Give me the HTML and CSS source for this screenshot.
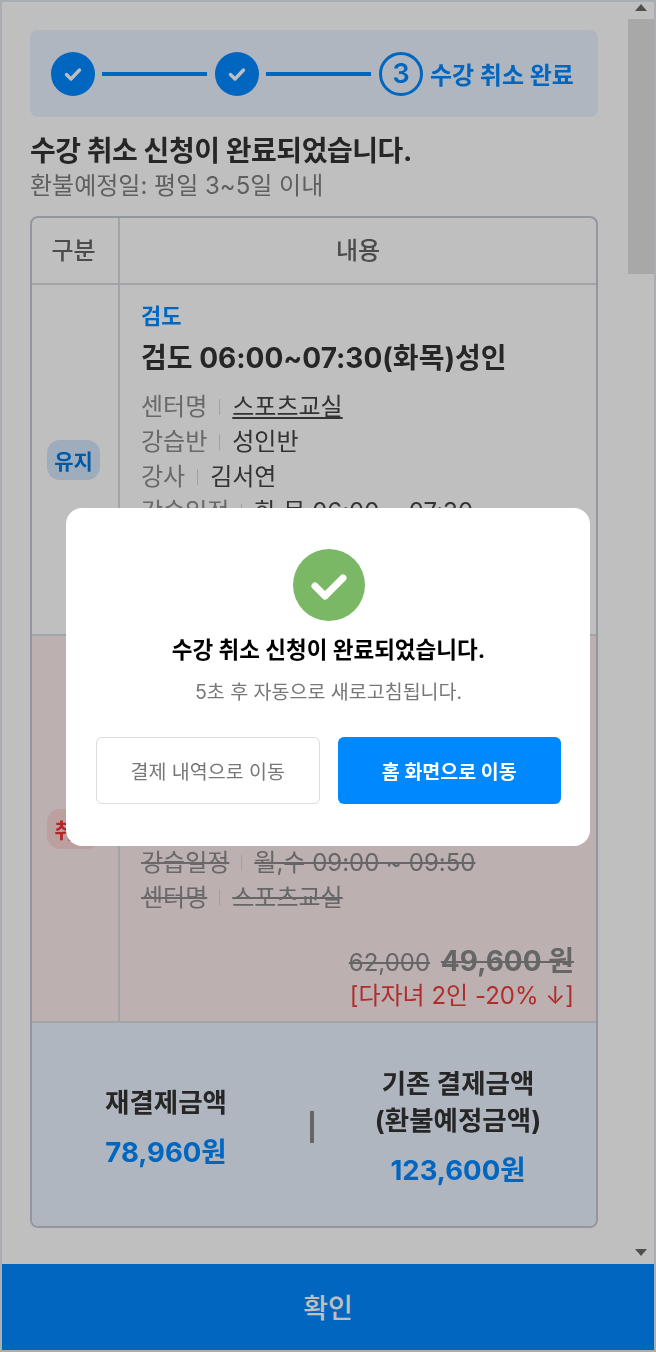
FILE: index.html
```html
<!DOCTYPE html>
<html lang="ko">

<head>
    <meta charset="UTF-8">
    <meta name="viewport" content="width=device-width, initial-scale=1.0">
    <title>수강 취소 완료</title>
    <link rel="stylesheet" href="styles.css">
</head>

<body>
    <div class="frame">
        <div class="page">
            <div class="scroll-area">
                <main class="content">
                    <div class="stepper">
                        <span class="step done">
                            <svg width="20" height="20" viewBox="0 0 20 20"><path d="M3.5 10.5l4.5 4.5 8.5-9" fill="none" stroke="#fff" stroke-width="3.4" stroke-linecap="round" stroke-linejoin="round"/></svg>
                        </span>
                        <span class="step-line"></span>
                        <span class="step done">
                            <svg width="20" height="20" viewBox="0 0 20 20"><path d="M3.5 10.5l4.5 4.5 8.5-9" fill="none" stroke="#fff" stroke-width="3.4" stroke-linecap="round" stroke-linejoin="round"/></svg>
                        </span>
                        <span class="step-line"></span>
                        <span class="step current">3</span>
                        <span class="step-label">수강 취소 완료</span>
                    </div>

                    <h1 class="notice-title">수강 취소 신청이 완료되었습니다.</h1>
                    <p class="notice-sub">환불예정일: 평일 3~5일 이내</p>

                    <div class="table">
                        <div class="table-head">
                            <div class="col-kind">구분</div>
                            <div class="col-body">내용</div>
                        </div>

                        <div class="table-row keep">
                            <div class="col-kind"><span class="badge badge-keep">유지</span></div>
                            <div class="col-body">
                                <div class="category">검도</div>
                                <div class="class-title">검도 06:00~07:30(화목)성인</div>
                                <div class="info"><span class="info-key">센터명</span><a class="info-val link">스포츠교실</a></div>
                                <div class="info"><span class="info-key">강습반</span><span class="info-val">성인반</span></div>
                                <div class="info"><span class="info-key">강사</span><span class="info-val">김서연</span></div>
                                <div class="info"><span class="info-key">강습일정</span><span class="info-val">화,목 06:00 ~ 07:30</span></div>
                            </div>
                        </div>

                        <div class="table-row cancel">
                            <div class="col-kind"><span class="badge badge-cancel">취소</span></div>
                            <div class="col-body">
                                <div class="info struck"><span class="info-key">강습일정</span><span class="info-val">월,수 09:00 ~ 09:50</span></div>
                                <div class="info struck"><span class="info-key">센터명</span><a class="info-val link">스포츠교실</a></div>
                                <div class="price">
                                    <span class="price-old">62,000</span>
                                    <span class="price-now">49,600 원</span>
                                </div>
                                <div class="discount">[다자녀 2인 -20% ↓]</div>
                            </div>
                        </div>

                        <div class="summary">
                            <div class="summary-item">
                                <div class="summary-label">재결제금액</div>
                                <div class="summary-value">78,960원</div>
                            </div>
                            <span class="summary-divider"></span>
                            <div class="summary-item">
                                <div class="summary-label">기존 결제금액<br>(환불예정금액)</div>
                                <div class="summary-value">123,600원</div>
                            </div>
                        </div>
                    </div>
                </main>
                <div class="scrollbar">
                    <span class="arrow-up"></span>
                    <span class="thumb"></span>
                    <span class="arrow-down"></span>
                </div>
            </div>
            <button class="confirm">확인</button>
        </div>

        <div class="dim">
            <div class="modal">
                <span class="modal-icon">
                    <svg width="72" height="72" viewBox="0 0 72 72"><path d="M22 37l10 10 18-18" fill="none" stroke="#fff" stroke-width="7" stroke-linecap="round" stroke-linejoin="round"/></svg>
                </span>
                <h2 class="modal-title">수강 취소 신청이 완료되었습니다.</h2>
                <p class="modal-text">5초 후 자동으로 새로고침됩니다.</p>
                <div class="modal-buttons">
                    <button class="btn btn-outline">결제 내역으로 이동</button>
                    <button class="btn btn-primary">홈 화면으로 이동</button>
                </div>
            </div>
        </div>
    </div>
</body>

</html>
```

FILE: styles.css
```css
* {
    box-sizing: border-box;
}

body {
    margin: 0;
    background-color: #fff;
    font-family: Inter, "Noto Sans CJK KR", sans-serif;
}

.frame {
    position: relative;
    width: 656px;
    height: 1352px;
    border: 2px solid #a9aeb5;
    overflow: hidden;
}

.page {
    display: flex;
    flex-direction: column;
    height: 100%;
    filter: blur(0.6px);
}

.scroll-area {
    display: flex;
    flex: 1;
    min-height: 0;
}

.content {
    flex: 1;
    padding: 28px 30px 0 28px;
}

/* stepper */
.stepper {
    display: flex;
    align-items: center;
    height: 87px;
    padding: 0 21px;
    background-color: #ebf3ff;
    border-radius: 8px;
}

.step {
    display: flex;
    flex: none;
    align-items: center;
    justify-content: center;
    width: 44px;
    height: 44px;
    border-radius: 50%;
    font-size: 27px;
    font-weight: 600;
}

.step.done {
    background-color: #0088ff;
}

.step.current {
    border: 3.5px solid #0088ff;
    color: #0088ff;
}

.step-line {
    width: 105px;
    height: 4px;
    margin: 0 8px 0 7px;
    background-color: #0088ff;
}

.step-label {
    margin-left: 7px;
    color: #0088ff;
    font-size: 24px;
    font-weight: 700;
    white-space: nowrap;
}

/* notice */
.notice-title {
    margin: 15px 0 0;
    color: #333;
    font-size: 28px;
    font-weight: 700;
    letter-spacing: -0.45px;
    line-height: 38px;
}

.notice-sub {
    margin: -1px 0 0;
    color: #808080;
    font-size: 24px;
    line-height: 34px;
}

/* table */
.table {
    margin-top: 13px;
    border: 2px solid #c6c9d4;
    border-radius: 8px;
    overflow: hidden;
}

.table-head,
.table-row {
    display: flex;
    border-bottom: 2px solid #d9dbe1;
}

.col-kind {
    display: flex;
    flex: none;
    align-items: center;
    justify-content: center;
    width: 88px;
    padding-right: 3px;
    border-right: 2px solid #d9dbe1;
}

.col-body {
    flex: 1;
    min-width: 0;
}

.table-head {
    height: 67px;
    color: #666;
    font-size: 24px;
    font-weight: 500;
}

.table-head .col-kind,
.table-head .col-body {
    display: flex;
    align-items: center;
    justify-content: center;
    padding-bottom: 4px;
}

.table-row .col-body {
    padding: 14px 22px 0 21px;
}

.table-row.keep {
    height: 351px;
}

.table-row.cancel {
    height: 387px;
    background-color: #fbebeb;
}

.table-row.cancel .col-body {
    padding-top: 207px;
}

.badge {
    display: flex;
    align-items: center;
    justify-content: center;
    width: 53px;
    height: 40px;
    border-radius: 13px;
    font-size: 21px;
    font-weight: 600;
}

.badge-keep {
    background-color: #d3e6fb;
    color: #0077dd;
}

.badge-cancel {
    background-color: #fbd5d5;
    color: #ee3333;
}

.category {
    color: #0088ff;
    font-size: 22px;
    font-weight: 600;
    line-height: 34px;
}

.class-title {
    margin: 4px 0 8px;
    color: #333;
    font-size: 28px;
    font-weight: 700;
    line-height: 42px;
}

.info {
    display: flex;
    align-items: center;
    height: 35px;
    color: #333;
    font-size: 24px;
    white-space: nowrap;
}

.info-key {
    color: #8c8c8c;
}

.info-key::after {
    content: "";
    display: inline-block;
    width: 1px;
    height: 16px;
    margin: 0 12px;
    background-color: #d8d8d8;
}

.info-val {
    color: #444;
}

.link {
    text-decoration: underline;
}

.struck span,
.struck a {
    text-decoration: line-through;
}

.struck .info-val {
    color: #888;
}

.price {
    margin-top: 30px;
    height: 36px;
    text-align: right;
    color: #888;
    font-size: 24px;
    line-height: 36px;
}

.price-old,
.price-now {
    text-decoration: line-through;
}

.price-now {
    margin-left: 4px;
    font-size: 28px;
    font-weight: 700;
}

.discount {
    color: #ee3b3b;
    font-size: 24px;
    line-height: 34px;
    text-align: right;
}

/* summary */
.summary {
    display: flex;
    align-items: center;
    justify-content: center;
    gap: 24px;
    height: 203px;
    padding: 5px 4px 0 0;
    background-color: #ebf3ff;
}

.summary-item {
    flex: none;
    width: 240px;
    color: #333;
    font-size: 26.5px;
    font-weight: 700;
    line-height: 37px;
    text-align: center;
}

.summary-divider {
    flex: none;
    width: 4px;
    height: 32px;
    background-color: #888;
}

.summary-value {
    margin-top: 12px;
    color: #0088ff;
    font-size: 27.5px;
    line-height: 38px;
}

/* scrollbar */
.scrollbar {
    display: flex;
    flex: none;
    flex-direction: column;
    align-items: center;
    width: 26px;
    padding-top: 2px;
}

.arrow-up,
.arrow-down {
    width: 0;
    height: 0;
    border-left: 6px solid transparent;
    border-right: 6px solid transparent;
}

.arrow-up {
    border-bottom: 7px solid #6b6b6b;
}

.arrow-down {
    margin-top: auto;
    margin-bottom: 8px;
    border-top: 7px solid #6b6b6b;
}

.thumb {
    width: 100%;
    height: 255px;
    margin-top: 8px;
    background-color: #e0e0e0;
}

/* footer */
.confirm {
    flex: none;
    height: 86px;
    padding: 0 0 2px;
    border: none;
    background-color: #0088ff;
    color: #fff;
    font-family: inherit;
    font-size: 27px;
    font-weight: 500;
}

/* popup */
.dim {
    position: absolute;
    inset: 0;
    display: flex;
    align-items: center;
    justify-content: center;
    background-color: rgba(0, 0, 0, 0.25);
}

.modal {
    width: 524px;
    height: 338px;
    margin-top: 2px;
    padding: 41px 29px 0 30px;
    background-color: #fff;
    border-radius: 16px;
    text-align: center;
    filter: blur(0.3px);
}

.modal-icon {
    display: block;
    width: 72px;
    height: 72px;
    margin: 0 auto;
    background-color: #7ab866;
    border-radius: 50%;
}

.modal-title {
    margin: 14px 0 0;
    color: #000;
    font-size: 22.5px;
    font-weight: 700;
    line-height: 30px;
}

.modal-text {
    margin: 14px 0 0;
    color: #777;
    font-size: 19.5px;
    line-height: 26px;
}

.modal-buttons {
    display: grid;
    grid-template-columns: 1fr 1fr;
    gap: 18px;
    margin-top: 32px;
}

.btn {
    height: 67px;
    padding: 0;
    border-radius: 6px;
    font-family: inherit;
    font-size: 19.5px;
}

.btn-outline {
    border: 1px solid #dcdce2;
    background-color: #fff;
    color: #777;
}

.btn-primary {
    border: none;
    background-color: #0088ff;
    color: #fff;
    font-weight: 700;
}
```
